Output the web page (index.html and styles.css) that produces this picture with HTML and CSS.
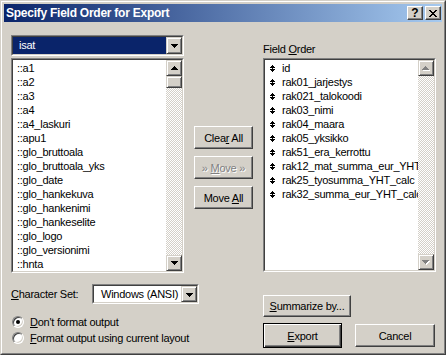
FILE: index.html
```html
<!DOCTYPE html>
<html lang="en">
<head>
    <meta charset="UTF-8">
    <title>Specify Field Order for Export</title>
    <link rel="stylesheet" href="styles.css">
</head>
<body>
<div class="window">
  <div class="frame">
    <div class="titlebar">
      <span class="title">Specify Field Order for Export</span>
      <div class="tbtns">
        <span class="tbtn">?</span>
        <span class="tbtn"><svg width="8" height="7" viewBox="0 0 8 7"><path d="M0 0h2v1h1v1h2v-1h1v-1h2v1h-1v1h-1v1h-1v1h1v1h1v1h1v1h-2v-1h-1v-1h-2v1h-1v1h-2v-1h1v-1h1v-1h1v-1h-1v-1h-1v-1h-1z"/></svg></span>
      </div>
    </div>

    <div class="content">
      <div class="top">
        <div class="col-left">
          <div class="combo">
            <div class="combo-in">
              <div class="combo-text selected">isat</div>
              <div class="drop"><svg width="7" height="4" viewBox="0 0 7 4"><path d="M0 0h7v1h-1v1h-1v1h-1v1h-1v-1h-1v-1h-1v-1h-1z"/></svg></div>
            </div>
          </div>
          <div class="listbox">
            <div class="list-in">
              <div class="items">
                <div class="item">::a1</div>
                <div class="item">::a2</div>
                <div class="item">::a3</div>
                <div class="item">::a4</div>
                <div class="item">::a4_laskuri</div>
                <div class="item">::apu1</div>
                <div class="item">::glo_bruttoala</div>
                <div class="item">::glo_bruttoala_yks</div>
                <div class="item">::glo_date</div>
                <div class="item">::glo_hankekuva</div>
                <div class="item">::glo_hankenimi</div>
                <div class="item">::glo_hankeselite</div>
                <div class="item">::glo_logo</div>
                <div class="item">::glo_versionimi</div>
                <div class="item">::hnta</div>
              </div>
              <div class="scroll">
                <div class="sbtn"><svg width="7" height="4" viewBox="0 0 7 4"><path d="M3 0h1v1h1v1h1v1h1v1h-7v-1h1v-1h1v-1h1z"/></svg></div>
                <div class="track"><div class="thumb"></div></div>
                <div class="sbtn"><svg width="7" height="4" viewBox="0 0 7 4"><path d="M0 0h7v1h-1v1h-1v1h-1v1h-1v-1h-1v-1h-1v-1h-1z"/></svg></div>
              </div>
            </div>
          </div>
        </div>

        <div class="col-mid">
          <div class="btn"><span>Clea<u>r</u> All</span></div>
          <div class="btn disabled"><span>» <u>M</u>ove »</span></div>
          <div class="btn"><span>Move <u>A</u>ll</span></div>
        </div>

        <div class="col-right">
          <div class="label">Field <u>O</u>rder</div>
          <div class="listbox">
            <div class="list-in">
              <div class="items fields">
                <div class="item"><svg class="mv" width="5" height="7" viewBox="0 0 5 7"><path d="M2 0h1v1h1v1h1v1h-2v1h2v1h-1v1h-1v1h-1v-1h-1v-1h-1v-1h2v-1h-2v-1h1v-1h1z"/></svg><span>id</span></div>
                <div class="item"><svg class="mv" width="5" height="7" viewBox="0 0 5 7"><path d="M2 0h1v1h1v1h1v1h-2v1h2v1h-1v1h-1v1h-1v-1h-1v-1h-1v-1h2v-1h-2v-1h1v-1h1z"/></svg><span>rak01_jarjestys</span></div>
                <div class="item"><svg class="mv" width="5" height="7" viewBox="0 0 5 7"><path d="M2 0h1v1h1v1h1v1h-2v1h2v1h-1v1h-1v1h-1v-1h-1v-1h-1v-1h2v-1h-2v-1h1v-1h1z"/></svg><span>rak021_talokoodi</span></div>
                <div class="item"><svg class="mv" width="5" height="7" viewBox="0 0 5 7"><path d="M2 0h1v1h1v1h1v1h-2v1h2v1h-1v1h-1v1h-1v-1h-1v-1h-1v-1h2v-1h-2v-1h1v-1h1z"/></svg><span>rak03_nimi</span></div>
                <div class="item"><svg class="mv" width="5" height="7" viewBox="0 0 5 7"><path d="M2 0h1v1h1v1h1v1h-2v1h2v1h-1v1h-1v1h-1v-1h-1v-1h-1v-1h2v-1h-2v-1h1v-1h1z"/></svg><span>rak04_maara</span></div>
                <div class="item"><svg class="mv" width="5" height="7" viewBox="0 0 5 7"><path d="M2 0h1v1h1v1h1v1h-2v1h2v1h-1v1h-1v1h-1v-1h-1v-1h-1v-1h2v-1h-2v-1h1v-1h1z"/></svg><span>rak05_yksikko</span></div>
                <div class="item"><svg class="mv" width="5" height="7" viewBox="0 0 5 7"><path d="M2 0h1v1h1v1h1v1h-2v1h2v1h-1v1h-1v1h-1v-1h-1v-1h-1v-1h2v-1h-2v-1h1v-1h1z"/></svg><span>rak51_era_kerrottu</span></div>
                <div class="item"><svg class="mv" width="5" height="7" viewBox="0 0 5 7"><path d="M2 0h1v1h1v1h1v1h-2v1h2v1h-1v1h-1v1h-1v-1h-1v-1h-1v-1h2v-1h-2v-1h1v-1h1z"/></svg><span>rak12_mat_summa_eur_YHT</span></div>
                <div class="item"><svg class="mv" width="5" height="7" viewBox="0 0 5 7"><path d="M2 0h1v1h1v1h1v1h-2v1h2v1h-1v1h-1v1h-1v-1h-1v-1h-1v-1h2v-1h-2v-1h1v-1h1z"/></svg><span>rak25_tyosumma_YHT_calc</span></div>
                <div class="item"><svg class="mv" width="5" height="7" viewBox="0 0 5 7"><path d="M2 0h1v1h1v1h1v1h-2v1h2v1h-1v1h-1v1h-1v-1h-1v-1h-1v-1h2v-1h-2v-1h1v-1h1z"/></svg><span>rak32_summa_eur_YHT_calc</span></div>
              </div>
              <div class="scroll">
                <div class="sbtn"><svg width="8" height="5" viewBox="0 0 8 5"><path fill="#fff" d="M4 1h1v1h1v1h1v1h1v1h-7v-1h1v-1h1v-1h1z"/><path fill="#808080" d="M3 0h1v1h1v1h1v1h1v1h-7v-1h1v-1h1v-1h1z"/></svg></div>
                <div class="track"></div>
                <div class="sbtn"><svg width="8" height="5" viewBox="0 0 8 5"><path fill="#fff" d="M1 1h7v1h-1v1h-1v1h-1v1h-1v-1h-1v-1h-1v-1h-1z"/><path fill="#808080" d="M0 0h7v1h-1v1h-1v1h-1v1h-1v-1h-1v-1h-1v-1h-1z"/></svg></div>
              </div>
            </div>
          </div>
        </div>
      </div>

      <div class="bottom">
        <div class="opts">
          <div class="charset">
            <span class="cs-label"><u>C</u>haracter Set:</span>
            <div class="combo small">
              <div class="combo-in">
                <div class="combo-text">Windows (ANSI)</div>
                <div class="drop"><svg width="7" height="4" viewBox="0 0 7 4"><path d="M0 0h7v1h-1v1h-1v1h-1v1h-1v-1h-1v-1h-1v-1h-1z"/></svg></div>
              </div>
            </div>
          </div>
          <div class="radios">
            <div class="radio-row"><span class="radio checked"></span><span><u>D</u>on't format output</span></div>
            <div class="radio-row"><span class="radio"></span><span><u>F</u>ormat output using current layout</span></div>
          </div>
        </div>
        <div class="actions">
          <div class="btn summarize"><span><u>S</u>ummarize by...</span></div>
          <div class="action-row">
            <div class="btn default"><span><u>E</u>xport</span></div>
            <div class="btn cancel"><span>Cancel</span></div>
          </div>
        </div>
      </div>
    </div>
  </div>
</div>
</body>
</html>
```

FILE: styles.css
```css
* {
    margin: 0;
    padding: 0;
    box-sizing: border-box;
}
body {
    font-family: "Liberation Sans", Arial, sans-serif;
    font-size: 11px;
    letter-spacing: -0.25px;
    color: #000;
    background: #d4d0c8;
}
u {
    text-decoration: underline;
    text-underline-offset: 1px;
}
.window {
    width: 446px;
    height: 355px;
    background: #d4d0c8;
    border: 1px solid;
    border-color: #d4d0c8 #404040 #404040 #d4d0c8;
}
.frame {
    height: 100%;
    border: 1px solid;
    border-color: #fff #808080 #808080 #fff;
    padding: 2px;
    display: flex;
    flex-direction: column;
}

/* title bar */
.titlebar {
    height: 18px;
    flex: none;
    background: linear-gradient(to right, #0a246a, #a6caf0);
    display: flex;
    align-items: center;
    justify-content: space-between;
    padding: 0 1px 0 2px;
}
.title {
    color: #fff;
    font-weight: bold;
    font-size: 12px;
}
.tbtns {
    display: flex;
    gap: 2px;
}
.tbtn {
    width: 16px;
    height: 14px;
    background: #d4d0c8;
    border: 1px solid;
    border-color: #fff #404040 #404040 #fff;
    box-shadow: inset -1px -1px #808080;
    display: flex;
    align-items: center;
    justify-content: center;
    font-weight: bold;
    font-size: 12px;
    line-height: 1;
    letter-spacing: 0;
}

/* main area */
.content {
    flex: 1;
    padding: 13px 6px 0 7px;
}
.top {
    display: flex;
    gap: 10px;
    height: 237px;
}
.col-left {
    width: 173px;
    display: flex;
    flex-direction: column;
    gap: 2px;
}
.col-mid {
    width: 59px;
    padding-top: 91px;
    display: flex;
    flex-direction: column;
    gap: 7px;
}
.col-right {
    width: 173px;
    display: flex;
    flex-direction: column;
}
.label {
    height: 23px;
    padding-top: 7px;
    line-height: 14px;
}

/* combo box */
.combo {
    height: 21px;
    border: 1px solid;
    border-color: #808080 #fff #fff #808080;
}
.combo-in {
    height: 100%;
    border: 1px solid;
    border-color: #404040 #d4d0c8 #d4d0c8 #404040;
    background: #fff;
    display: flex;
}
.combo-text {
    flex: 1;
    padding-left: 6px;
    line-height: 17px;
    white-space: nowrap;
    overflow: hidden;
}
.combo-text.selected {
    background: #0a246a;
    color: #fff;
}
.drop {
    width: 16px;
    background: #d4d0c8;
    border: 1px solid;
    border-color: #d4d0c8 #404040 #404040 #d4d0c8;
    box-shadow: inset 1px 1px #fff, inset -1px -1px #808080;
    display: flex;
    align-items: center;
    justify-content: center;
}
.drop svg {
    margin-top: 1px;
}

/* list box */
.listbox {
    flex: 1;
    border: 1px solid;
    border-color: #808080 #fff #fff #808080;
}
.list-in {
    height: 100%;
    border: 1px solid;
    border-color: #404040 #d4d0c8 #d4d0c8 #404040;
    background: #fff;
    display: flex;
}
.items {
    flex: 1;
    padding: 1px 0 0 4px;
    overflow: hidden;
    white-space: nowrap;
}
.item {
    height: 14px;
    line-height: 14px;
}
.fields {
    padding-left: 5px;
}
.fields .item {
    display: flex;
    align-items: center;
}
.mv {
    flex: none;
    margin-right: 7px;
}

/* scroll bar */
.scroll {
    width: 16px;
    flex: none;
    display: flex;
    flex-direction: column;
}
.sbtn, .thumb {
    height: 16px;
    background: #d4d0c8;
    border: 1px solid;
    border-color: #d4d0c8 #404040 #404040 #d4d0c8;
    box-shadow: inset 1px 1px #fff, inset -1px -1px #808080;
    display: flex;
    align-items: center;
    justify-content: center;
}
.thumb {
    height: 12px;
}
.track {
    flex: 1;
    background: repeating-conic-gradient(#d4d0c8 0 25%, #fff 0 50%) 0 0 / 2px 2px;
}

/* push buttons */
.btn {
    height: 23px;
    background: #d4d0c8;
    border: 1px solid;
    border-color: #fff #404040 #404040 #fff;
    box-shadow: inset -1px -1px #808080;
    display: flex;
    align-items: center;
    justify-content: center;
    white-space: nowrap;
}
.btn.disabled {
    color: #808080;
    text-shadow: 1px 1px #fff;
}
.btn.default {
    width: 79px;
    height: 25px;
    border-color: #000;
    box-shadow: inset 1px 1px #fff, inset -1px -1px #404040, inset -2px -2px #808080;
}
.btn.cancel {
    width: 80px;
}
.summarize {
    width: 88px;
    height: 22px;
}

/* bottom part */
.bottom {
    display: flex;
}
.opts {
    width: 252px;
    padding-top: 12px;
}
.charset {
    display: flex;
    align-items: center;
    height: 20px;
}
.cs-label {
    width: 81px;
}
.combo.small {
    width: 107px;
    height: 20px;
}
.combo.small .combo-text {
    padding-left: 7px;
    line-height: 16px;
}
.radios {
    margin-top: 10px;
}
.radio-row {
    height: 16px;
    display: flex;
    align-items: center;
    gap: 6px;
}
.radio {
    width: 12px;
    height: 12px;
    margin-left: 1px;
    border-radius: 50%;
    background: #fff;
    border: 1px solid;
    border-color: #808080 #fff #fff #808080;
    box-shadow: inset 1px 1px #404040, inset -1px -1px #d4d0c8;
    display: flex;
    align-items: center;
    justify-content: center;
}
.radio.checked:after {
    content: '';
    width: 4px;
    height: 4px;
    border-radius: 50%;
    background: #000;
}
.actions {
    padding-top: 23px;
}
.action-row {
    display: flex;
    align-items: center;
    gap: 13px;
    margin-top: 6px;
}
```
